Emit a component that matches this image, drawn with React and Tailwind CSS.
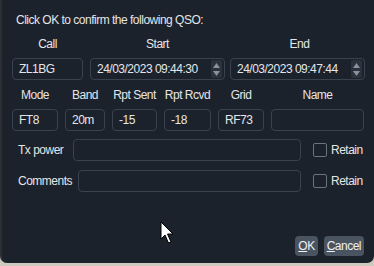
import React from "react";

const font = { fontFamily: '"Liberation Sans", Arial, sans-serif', letterSpacing: "-0.5px" };

const Spin = () => (
  <div className="flex flex-col items-center justify-center w-[11px] h-[18px] bg-[#2a323d] rounded-[2px] gap-[3px]">
    <svg width="7" height="5" viewBox="0 0 7 5">
      <path d="M3.5 0 L7 5 L0 5 Z" fill="#8a929c" />
    </svg>
    <svg width="7" height="5" viewBox="0 0 7 5">
      <path d="M0 0 L7 0 L3.5 5 Z" fill="#8a929c" />
    </svg>
  </div>
);

const Field = ({ w, value, spin }) => (
  <div
    className={`${w} h-[22px] shrink-0 border border-[#3a424d] rounded-[4px] flex items-center justify-between pl-[6px] pr-[2px] text-[12px] leading-[16px] whitespace-nowrap text-[#e4e6e8]`}
  >
    <span>{value}</span>
    {spin && <Spin />}
  </div>
);

const Label = ({ w, children }) => (
  <div className={`${w} shrink-0 text-center text-[12px] leading-[16px] whitespace-nowrap text-[#e4e6e8]`}>
    {children}
  </div>
);

const Retain = () => (
  <div className="flex items-center gap-[4px] ml-[12px]">
    <div className="w-[14px] h-[14px] border border-[#6b737c] rounded-[2px]" />
    <span className="text-[12px] leading-[16px] text-[#e4e6e8]">Retain</span>
  </div>
);

export default function App() {
  return (
    <div className="w-[374px] h-[266px] bg-[#cdc9bf] overflow-hidden" style={font}>
      <div className="relative w-[374px] h-[263px] bg-[#1b222c] rounded-b-[7px] border-l-[2px] border-[#2c2f33] pl-[10px]">
        <div className="pt-[12px] pl-[4px] text-[12px] leading-[16px] whitespace-nowrap text-[#e4e6e8]">
          Click OK to confirm the following QSO:
        </div>

        <div className="flex mt-[8px] gap-[7px]">
          <Label w="w-[71px]">Call</Label>
          <Label w="w-[135px]">Start</Label>
          <Label w="w-[135px]">End</Label>
        </div>
        <div className="flex mt-[6px]">
          <Field w="w-[71px]" value="ZL1BG" />
          <div className="w-[7px] shrink-0" />
          <Field w="w-[135px]" value="24/03/2023 09:44:30" spin />
          <div className="w-[5px] shrink-0" />
          <Field w="w-[135px]" value="24/03/2023 09:47:44" spin />
        </div>

        <div className="flex mt-[7px] gap-[7px]">
          <Label w="w-[46px]">Mode</Label>
          <Label w="w-[40px]">Band</Label>
          <Label w="w-[45px]">Rpt Sent</Label>
          <Label w="w-[47px]">Rpt Rcvd</Label>
          <Label w="w-[46px]">Grid</Label>
          <Label w="w-[93px]">Name</Label>
        </div>
        <div className="flex mt-[6px] gap-[7px]">
          <Field w="w-[46px]" value="FT8" />
          <Field w="w-[40px]" value="20m" />
          <Field w="w-[45px]" value="-15" />
          <Field w="w-[47px]" value="-18" />
          <Field w="w-[46px]" value="RF73" />
          <Field w="w-[93px]" value="" />
        </div>

        <div className="flex items-center mt-[8px]">
          <span className="pl-[6px] w-[61px] shrink-0 text-[12px] leading-[16px] whitespace-nowrap text-[#e4e6e8]">Tx power</span>
          <Field w="w-[228px]" value="" />
          <Retain />
        </div>
        <div className="flex items-center mt-[9px]">
          <span className="pl-[6px] w-[66px] shrink-0 text-[12px] leading-[16px] whitespace-nowrap text-[#e4e6e8]">Comments</span>
          <Field w="w-[223px]" value="" />
          <Retain />
        </div>

        <div className="flex justify-end gap-[6px] mt-[44px] pr-[10px]">
          <div className="h-[20px] px-[3px] bg-[#4a5460] rounded-[4px] text-[12px] leading-[16px] text-[#eef0f2] flex items-center">
            <span><span className="underline">O</span>K</span>
          </div>
          <div className="h-[20px] px-[3px] bg-[#4a5460] rounded-[4px] text-[12px] leading-[16px] text-[#eef0f2] flex items-center">
            <span><span className="underline">C</span>ancel</span>
          </div>
        </div>

        <svg className="absolute left-[158px] top-[221px]" width="16" height="25" viewBox="0 0 16 25">
          <path d="M1 1 L1 18 L5 14 L8.5 22 L11 21 L7.5 13 L13 13 Z" fill="#ffffff" stroke="#000000" strokeWidth="1" />
        </svg>
      </div>
    </div>
  );
}
